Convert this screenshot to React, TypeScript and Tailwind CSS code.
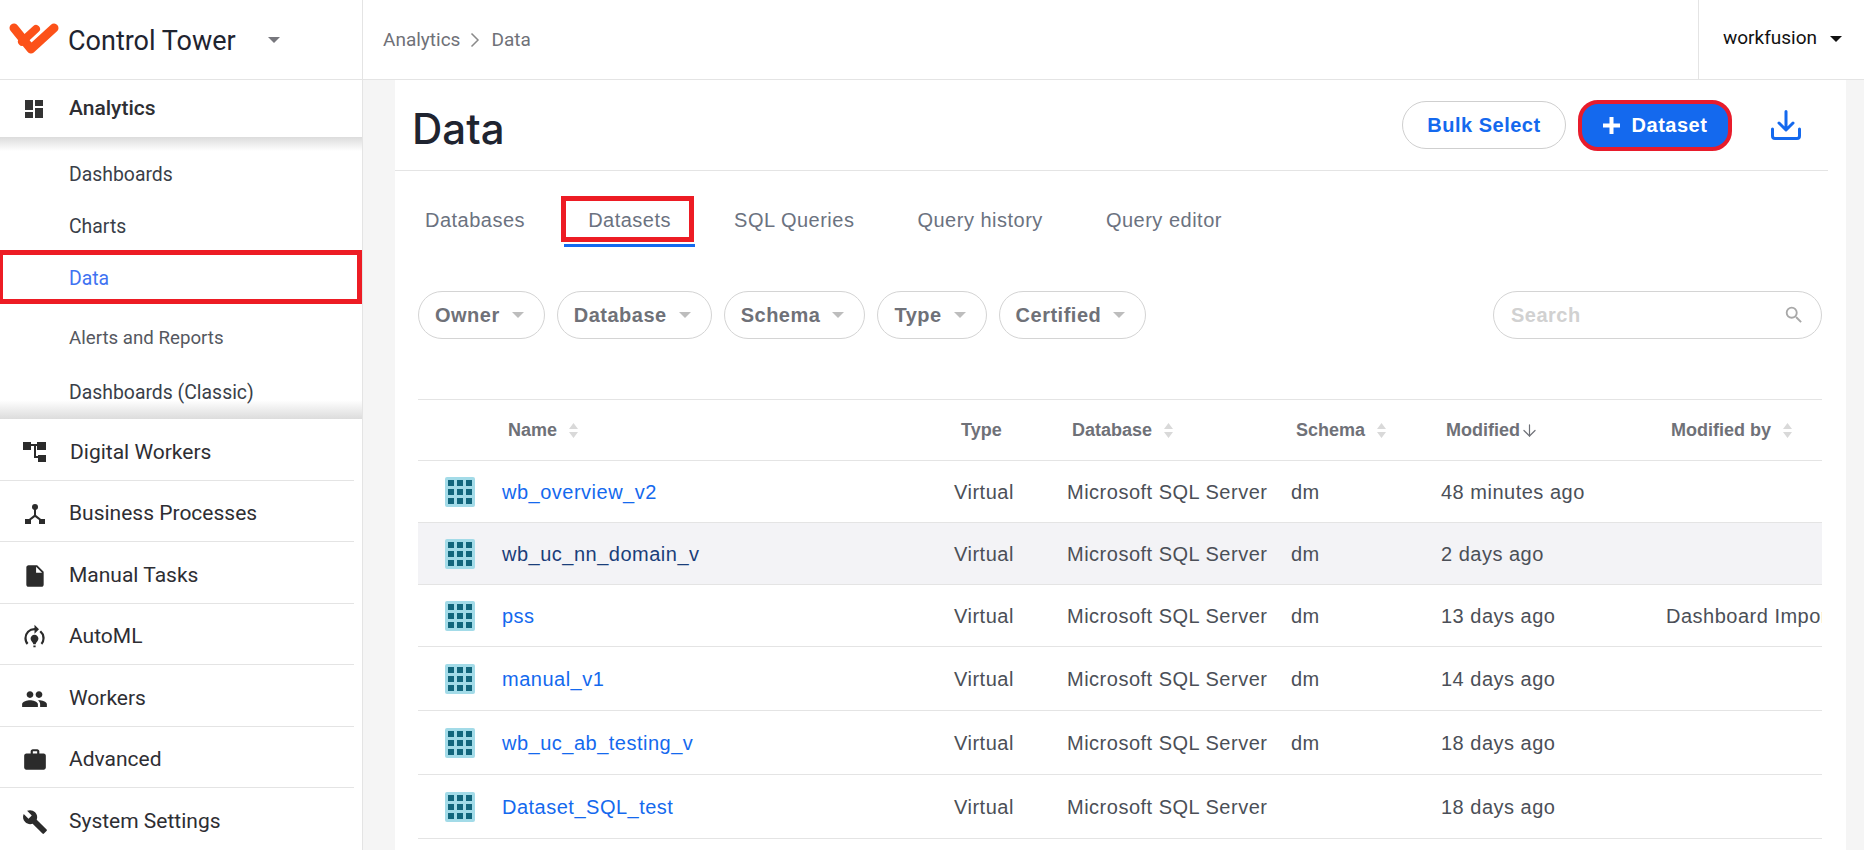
import React from 'react';
import { MdDashboard, MdInsertDriveFile, MdModelTraining, MdPeople, MdWork, MdBuild, MdSearch } from 'react-icons/md';
import { ArrowDown } from 'lucide-react';

const Logo = () => (
  <svg width="50" height="32" viewBox="0 0 50 32" fill="none" className="overflow-visible">
    <path d="M4 4 L21 25 L44 4" stroke="#fc5119" strokeWidth="9" strokeLinecap="round" strokeLinejoin="round" />
    <path d="M12 17.700 L26 4.900" stroke="#fc5119" strokeWidth="8" strokeLinecap="round" />
  </svg>
);

const Caret = ({ className }: { className: string }) => (
  <span className={`inline-block h-0 w-0 border-x-[6px] border-t-[6px] border-x-transparent ${className}`} />
);

const DigitalWorkersIcon = () => (
  <svg width="24" height="24" viewBox="0 0 24 24" fill="#2b2b2b">
    <rect x="0" y="1" width="8" height="8" />
    <rect x="8" y="3" width="6" height="2" />
    <rect x="14" y="1" width="9" height="8" />
    <rect x="11" y="5" width="2" height="12" />
    <rect x="13" y="15" width="2" height="2" />
    <rect x="15" y="14" width="8" height="7" />
  </svg>
);

const ProcessIcon = () => (
  <svg width="24" height="24" viewBox="0 0 24 24" fill="#2b2b2b">
    <circle cx="12" cy="5" r="3" />
    <path d="M11 7h2v6l5 4-1.300 1.500L12 15l-4.700 3.500L6 17l5-4z" />
    <rect x="2" y="17" width="6" height="5" />
    <rect x="16" y="17" width="6" height="5" />
  </svg>
);

const DatasetIcon = () => (
  <svg width="30" height="30" viewBox="0 0 30 30">
    <rect width="30" height="30" rx="2" fill="#a3dbe8" />
    <g fill="#12667c">
      <rect x="3" y="3" width="6" height="6" />
      <rect x="12" y="3" width="6" height="6" />
      <rect x="21" y="3" width="6" height="6" />
      <rect x="3" y="12" width="6" height="6" />
      <rect x="12" y="12" width="6" height="6" />
      <rect x="21" y="12" width="6" height="6" />
      <rect x="3" y="21" width="6" height="6" />
      <rect x="12" y="21" width="6" height="6" />
      <rect x="21" y="21" width="6" height="6" />
    </g>
  </svg>
);

const SortIcon = () => (
  <svg width="9" height="15" viewBox="0 0 9 15" fill="#d9d9d9" className="ml-3 inline-block">
    <path d="M4.500 0 L9 6 H0 Z M0 9 H9 L4.500 15 Z" />
  </svg>
);

const mainNav = [
  { label: 'Business Processes', h: 'h-[61px]', icon: <ProcessIcon /> },
  { label: 'Manual Tasks', h: 'h-[62px]', icon: <MdInsertDriveFile size={26} color="#2b2b2b" /> },
  { label: 'AutoML', h: 'h-[61px]', icon: <MdModelTraining size={28} color="#2b2b2b" /> },
  { label: 'Workers', h: 'h-[62px]', icon: <MdPeople size={28} color="#2b2b2b" /> },
  { label: 'Advanced', h: 'h-[61px]', icon: <MdWork size={26} color="#2b2b2b" /> },
  { label: 'System Settings', h: 'h-[62px]', icon: <MdBuild size={26} color="#2b2b2b" /> },
];

const Sidebar = () => (
  <aside className="flex w-[363px] shrink-0 flex-col border-r border-[#e4e4e4] bg-white font-['Roboto',sans-serif]">
    <div className="flex h-[80px] items-center border-b border-[#e4e4e4] pl-[10px]">
      <Logo />
      <span className="ml-[8px] pt-[4px] text-[27px] text-[#1f2430]">Control Tower</span>
      <Caret className="ml-[32px] border-t-[#77777d]" />
    </div>
    <div className="flex h-[57px] items-center pr-[8px]">
      <MdDashboard size={24} color="#333333" className="ml-[22px]" />
      <span className="ml-[23px] text-[21px] font-medium text-[#2e2e33]">Analytics</span>
    </div>
    <div className="h-[282px] bg-gradient-to-b from-[#dcdcdc] via-white via-[5%] to-white text-[19.400px] text-[#3a3f49]">
      <div className="flex h-[63px] items-end pb-[11px] pl-[69px]">Dashboards</div>
      <div className="flex h-[50px] items-center pl-[69px] pt-[4px]">Charts</div>
      <div className="flex h-[54px] items-center border-[5px] border-l-[3px] border-[#ed1c24] pl-[66px] pt-[4px] text-[#3f73f2]">Data</div>
      <div className="flex h-[68px] items-center pl-[69px] text-[18.700px] text-[#55585f]">Alerts and Reports</div>
      <div className="flex h-[47px] items-center bg-gradient-to-b from-white from-60% to-[#dcdcdc] pb-[6px] pl-[69px]">Dashboards (Classic)</div>
    </div>
    <div className="mr-[8px] flex h-[62px] items-center border-b border-[#e4e4e4] pl-[23px] pt-[6px]">
      <DigitalWorkersIcon />
      <span className="ml-[23px] text-[21px] text-[#2e2e33]">Digital Workers</span>
    </div>
    {mainNav.map((item, i) => (
      <div
        key={item.label}
        className={`mr-[8px] flex ${item.h} shrink-0 items-center pl-[21px] pt-[6px] ${i < mainNav.length - 1 ? 'border-b border-[#e4e4e4]' : ''}`}
      >
        <span className="flex w-[27px] justify-center">{item.icon}</span>
        <span className="ml-[21px] text-[21px] text-[#2e2e33]">{item.label}</span>
      </div>
    ))}
  </aside>
);

const tabs = ['Databases', 'Datasets', 'SQL Queries', 'Query history', 'Query editor'];
const filters = ['Owner', 'Database', 'Schema', 'Type', 'Certified'];

const rows = [
  { name: 'wb_overview_v2', schema: 'dm', modified: '48 minutes ago', by: '', h: 'h-[62px]' },
  { name: 'wb_uc_nn_domain_v', schema: 'dm', modified: '2 days ago', by: '', h: 'h-[62px]', hover: true },
  { name: 'pss', schema: 'dm', modified: '13 days ago', by: 'Dashboard Import', h: 'h-[62px]' },
  { name: 'manual_v1', schema: 'dm', modified: '14 days ago', by: '', h: 'h-[64px]' },
  { name: 'wb_uc_ab_testing_v', schema: 'dm', modified: '18 days ago', by: '', h: 'h-[64px]' },
  { name: 'Dataset_SQL_test', schema: '', modified: '18 days ago', by: '', h: 'h-[64px]' },
];

const gridCols = 'grid grid-cols-[84px_452px_113px_224px_150px_225px_156px]';

const DataPanel = () => (
  <main className="ml-[32px] mr-[18px] flex-1 overflow-hidden bg-white font-['Liberation_Sans',Arial,sans-serif] tracking-[0.5px]">
    <div className="mr-[18px] flex h-[91px] items-center border-b border-[#e4e4e4] pl-[17px] pr-[27px]">
      <h1 className="pt-[6px] font-['Inter',sans-serif] text-[42px] font-medium tracking-normal text-[#1f2430]">Data</h1>
      <button className="ml-auto h-[48px] w-[164px] rounded-full border border-[#cfcfcf] text-[20px] font-bold text-[#1469ee]">
        Bulk Select
      </button>
      <button className="ml-[12px] flex h-[51px] w-[154px] items-center justify-center gap-[12px] rounded-[20px] border-[4px] border-[#e81c2c] bg-[#1469ee] text-[20px] font-bold text-white">
        <svg width="17" height="17" viewBox="0 0 17 17" fill="#ffffff">
          <path d="M6.500 0h4v6.500H17v4h-6.500V17h-4v-6.500H0v-4h6.500z" />
        </svg>
        Dataset
      </button>
      <svg width="30" height="30" viewBox="0 0 30 30" fill="none" stroke="#1469ee" strokeWidth="3" strokeLinecap="round" strokeLinejoin="round" className="ml-[39px]">
        <path d="M15 1.500v18M8 13l7 7 7-7M1.500 19v7q0 2.500 2.500 2.500h22q2.500 0 2.500-2.500v-7" />
      </svg>
    </div>

    <div className="flex h-[76px] items-end gap-[15px] pl-[6px] text-[20px] text-[#6b7280]">
      {tabs.map((tab) => (
        <div key={tab} className={`relative border-b-[3px] px-[24px] pb-[9px] ${tab === 'Datasets' ? 'border-[#1469ee]' : 'border-transparent'}`}>
          {tab}
          {tab === 'Datasets' && <span className="absolute -top-[9px] -left-[3px] h-[46px] w-[133px] border-[5px] border-[#ed1c24]" />}
        </div>
      ))}
    </div>

    <div className="flex items-center pl-[23px] pr-[24px] pt-[44px]">
      {filters.map((f) => (
        <div key={f} className="mr-[12px] flex h-[48px] items-center gap-[12px] rounded-full border border-[#d4d4d4] pl-[16px] pr-[20px] text-[20px] font-bold tracking-[0.5px] text-[#6f7178]">
          {f}
          <Caret className="border-t-[#bdbdbd]" />
        </div>
      ))}
      <div className="ml-auto flex h-[48px] w-[329px] items-center justify-between rounded-full border border-[#d4d4d4] pl-[17px] pr-[16px] text-[20px] font-bold text-[#d1d1d1]">
        Search
        <MdSearch size={22} color="#a8a8a8" />
      </div>
    </div>

    <div className="ml-[23px] mr-[24px] mt-[60px] text-[20px] text-[#4b4f57]">
      <div className={`${gridCols} h-[62px] items-center border-y border-[#e4e4e4] text-[18px] font-bold tracking-normal text-[#6f7178]`}>
        <span />
        <span className="pl-[6px]">Name<SortIcon /></span>
        <span className="pl-[7px]">Type</span>
        <span className="pl-[5px]">Database<SortIcon /></span>
        <span className="pl-[5px]">Schema<SortIcon /></span>
        <span className="flex items-center pl-[5px]">Modified<ArrowDown size={19} strokeWidth={1.5} /></span>
        <span className="pl-[5px]">Modified by<SortIcon /></span>
      </div>
      {rows.map((r) => (
        <div key={r.name} className={`${gridCols} ${r.h} items-center border-b border-[#e4e4e4] ${r.hover ? 'bg-[#f3f3f6]' : ''}`}>
          <span className="flex pl-[27px]"><DatasetIcon /></span>
          <span className={r.hover ? 'text-[#1a3e7a]' : 'text-[#1469ee]'}>{r.name}</span>
          <span>Virtual</span>
          <span>Microsoft SQL Server</span>
          <span>{r.schema}</span>
          <span>{r.modified}</span>
          <span className="overflow-hidden whitespace-nowrap">{r.by}</span>
        </div>
      ))}
    </div>
  </main>
);

export default function App() {
  return (
    <div className="flex h-[850px] w-[1864px] overflow-hidden bg-[#f5f5f5]">
      <Sidebar />
      <div className="flex min-w-0 flex-1 flex-col">
        <header className="flex h-[80px] shrink-0 items-center border-b border-[#e4e4e4] bg-white font-['Roboto',sans-serif]">
          <span className="ml-[20px] pt-[2px] text-[19px] text-[#6f7178]">Analytics</span>
          <svg width="10" height="16" viewBox="0 0 10 16" fill="none" stroke="#8a8a8a" strokeWidth="1.500" className="ml-[10px]">
            <path d="M1.500 1.500 8 8l-6.500 6.500" />
          </svg>
          <span className="ml-[11px] pt-[2px] text-[19px] text-[#6f7178]">Data</span>
          <div className="ml-auto flex h-full w-[166px] items-center border-l border-[#e4e4e4] pb-[2px] pl-[24px] text-[19px] text-[#111111]">
            workfusion
            <Caret className="ml-[13px] border-t-[#111111]" />
          </div>
        </header>
        <DataPanel />
      </div>
    </div>
  );
}
